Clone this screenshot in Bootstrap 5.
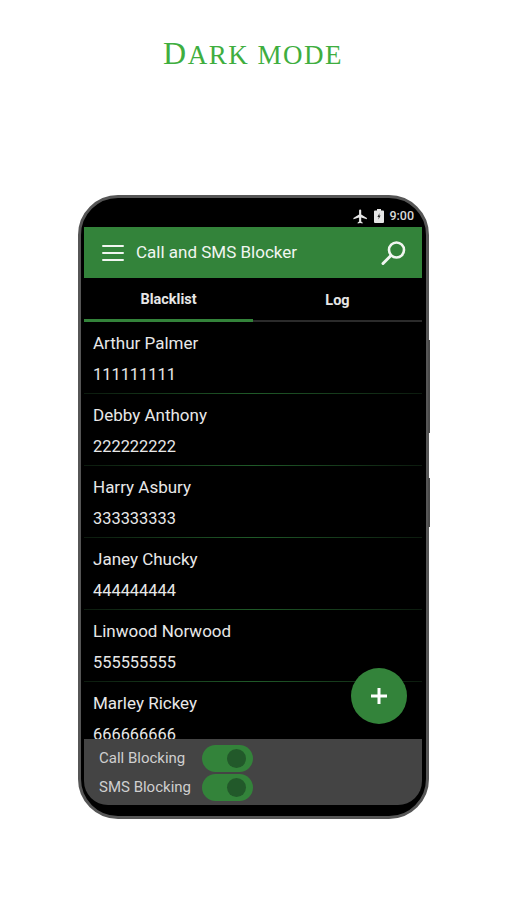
<!DOCTYPE html>
<html lang="en">
  <head>
    <meta charset="UTF-8" />
    <meta name="viewport" content="width=device-width, initial-scale=1.0" />
    <title>Dark mode</title>
    <link
      rel="stylesheet"
      href="https://cdn.jsdelivr.net/npm/bootstrap@5.3.3/dist/css/bootstrap.min.css"
    />
    <script src="https://cdn.jsdelivr.net/npm/bootstrap@5.3.3/dist/js/bootstrap.bundle.min.js"></script>
    <style>
      body {
        background: #fff;
        font-family: Roboto, "Liberation Sans", sans-serif;
        overflow: hidden;
      }
      .page-wrap {
        width: 506px;
        height: 900px;
        padding-top: 33px;
      }
      .promo-title {
        font-family: "Liberation Serif", serif;
        text-transform: uppercase;
        font-size: 27px;
        line-height: 40px;
        height: 40px;
        letter-spacing: 1.5px;
        color: #3fae3f;
        margin: 0 0 122px;
        font-weight: 400;
      }
      .promo-title::first-letter {
        font-size: 32px;
      }
      .phone {
        width: 351px;
        height: 624px;
        margin-left: 78px;
        background: #000;
        border: 3px solid #565656;
        border-radius: 40px;
        padding: 7px 4px 11px 3px;
        position: relative;
      }
      .side-key {
        position: absolute;
        right: -4px;
        width: 2px;
        background: #4a4a4a;
      }
      .key-one { top: 142px; height: 93px; }
      .key-two { top: 280px; height: 49px; }
      .screen {
        height: 100%;
        color: #e4e4e4;
        overflow: hidden;
        border-radius: 0 0 24px 24px;
      }
      .status-row {
        height: 22px;
        flex: none;
        font-size: 12.5px;
        font-weight: 500;
        color: #d8d8d8;
        padding-right: 8px;
        gap: 5px;
      }
      .app-bar {
        height: 51px;
        flex: none;
        background: #33833a;
        padding: 0 15px 0 18px;
        color: #f1f6f1;
        font-size: 17px;
      }
      .app-bar .navbar-brand {
        font-size: inherit;
        color: inherit;
        margin: 0 0 0 12px;
        padding: 0;
      }
      .tab-row {
        height: 44px;
        flex: none;
        border-bottom: 2px solid #2b2b2b;
      }
      .tab-item {
        width: 50%;
        font-size: 14.5px;
        font-weight: 700;
        color: #e6e6e6;
        margin-bottom: -2px;
        padding-top: 3px;
        border-bottom: 2px solid transparent;
      }
      .tab-item.on {
        border-bottom: 3px solid #33833a;
      }
      .contact-list {
        flex: 1 1 0;
        min-height: 0;
      }
      .contact-item {
        height: 72px;
        flex: none;
        padding: 9px 9px 0;
        border-bottom: 1px solid #143018;
        border-image: linear-gradient(90deg, #0c1a0e, #1f5a28 50%, #0c1a0e) 1;
        font-size: 17px;
        font-weight: 400;
        line-height: 24px;
        color: #e8e8e8;
      }
      .contact-item div + div {
        margin-top: 8px;
        font-size: 16.4px;
      }
      .switch-panel {
        height: 66px;
        flex: none;
        background: #444;
        padding: 5px 15px 0;
        font-size: 15px;
        color: #cfcfcf;
      }
      .switch-row {
        height: 29px;
        gap: 0;
      }
      .switch-label {
        width: 103px;
        flex: none;
      }
      .toggle-pill {
        width: 51px;
        height: 27px;
        border-radius: 14px;
        background: #33833a;
        position: relative;
      }
      .toggle-pill::after {
        content: "";
        position: absolute;
        right: 7px;
        top: 4px;
        width: 19px;
        height: 19px;
        border-radius: 50%;
        background: #22592a;
      }
      .fab {
        position: absolute;
        left: 270px;
        top: 470px;
        width: 56px;
        height: 56px;
        border-radius: 50%;
        background: #33833a;
        border: 0;
        padding: 0;
      }
    </style>
  </head>
  <body>
    <div class="page-wrap">
      <h1 class="promo-title text-center">Dark mode</h1>

      <div class="phone">
        <span class="side-key key-one"></span>
        <span class="side-key key-two"></span>

        <div class="screen d-flex flex-column">
          <div class="status-row d-flex justify-content-end align-items-center">
            <svg width="17" height="17" viewBox="0 0 24 24" fill="#e6e6e6">
              <path d="M21 16v-2l-8-5V3.5a1.5 1.5 0 0 0-3 0V9l-8 5v2l8-2.5V19l-2 1.5V22l3.5-1 3.5 1v-1.5L13 19v-5.5z" />
            </svg>
            <svg width="10" height="14" viewBox="0 0 10 14">
              <path fill="#e6e6e6" d="M3 0h4v1.5h2a1 1 0 0 1 1 1V13a1 1 0 0 1-1 1H1a1 1 0 0 1-1-1V2.5a1 1 0 0 1 1-1h2z" />
              <path fill="#222" d="M5.6 4 3.4 8h1.4l-.4 2.6L6.6 6.6H5.2z" />
            </svg>
            <span>9:00</span>
          </div>

          <nav class="navbar app-bar flex-nowrap justify-content-start">
            <svg width="22" height="18" viewBox="0 0 22 18" stroke="#f1f6f1" stroke-width="2" stroke-linecap="round">
              <path d="M1 2h20M1 9h20M1 16h20" />
            </svg>
            <span class="navbar-brand">Call and SMS Blocker</span>
            <svg class="ms-auto" width="26" height="26" viewBox="0 0 26 26" fill="none" stroke="#f1f6f1" stroke-linecap="round">
              <circle cx="15.5" cy="10" r="7.5" stroke-width="2.6" />
              <path d="M10 15.5 2 23.5" stroke-width="3" />
            </svg>
          </nav>

          <div class="tab-row d-flex">
            <div class="tab-item on d-flex align-items-center justify-content-center">Blacklist</div>
            <div class="tab-item d-flex align-items-center justify-content-center">Log</div>
          </div>

          <div class="contact-list overflow-hidden d-flex flex-column">
            <div class="contact-item"><div>Arthur Palmer</div><div>111111111</div></div>
            <div class="contact-item"><div>Debby Anthony</div><div>222222222</div></div>
            <div class="contact-item"><div>Harry Asbury</div><div>333333333</div></div>
            <div class="contact-item"><div>Janey Chucky</div><div>444444444</div></div>
            <div class="contact-item"><div>Linwood Norwood</div><div>555555555</div></div>
            <div class="contact-item"><div>Marley Rickey</div><div>666666666</div></div>
          </div>

          <div class="switch-panel">
            <div class="switch-row d-flex align-items-center">
              <span class="switch-label">Call Blocking</span>
              <span class="toggle-pill"></span>
            </div>
            <div class="switch-row d-flex align-items-center">
              <span class="switch-label">SMS Blocking</span>
              <span class="toggle-pill"></span>
            </div>
          </div>
        </div>

        <button class="fab d-flex align-items-center justify-content-center" type="button" aria-label="Add">
          <svg width="20" height="20" viewBox="0 0 20 20" stroke="#fff" stroke-width="3">
            <path d="M10 2v16M2 10h16" />
          </svg>
        </button>
      </div>
    </div>
  </body>
</html>
